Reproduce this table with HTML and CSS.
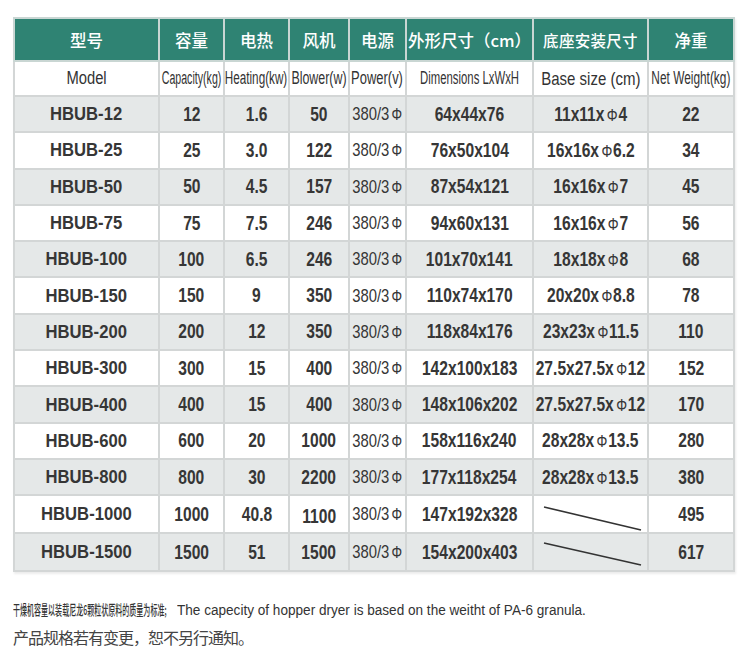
FILE: index.html
```html
<!DOCTYPE html>
<html lang="zh">
<head>
<meta charset="utf-8">
<title>HBUB 干燥机规格</title>
<link rel="stylesheet" href="styles.css">
</head>
<body>
<div class="page">
  <table class="spec">
    <colgroup>
      <col class="c-model"><col class="c-cap"><col class="c-heat"><col class="c-blow"><col class="c-pow"><col class="c-dim"><col class="c-base"><col class="c-net">
    </colgroup>
    <thead>
      <tr class="head-cn">
        <th>型号</th><th>容量</th><th>电热</th><th>风机</th><th>电源</th><th>外形尺寸（cm）</th><th class="wide">底座安装尺寸</th><th>净重</th>
      </tr>
      <tr class="head-en">
        <th><span class="t e82">Model</span></th>
        <th><span class="t e59">Capacity(kg)</span></th>
        <th><span class="t e65">Heating(kw)</span></th>
        <th><span class="t e69">Blower(w)</span></th>
        <th><span class="t e72">Power(v)</span></th>
        <th><span class="t e63">Dimensions LxWxH</span></th>
        <th><span class="t e79 big">Base size (cm)</span></th>
        <th><span class="t e66">Net Weight(kg)</span></th>
      </tr>
    </thead>
    <tbody>
      <tr><td><span class="t m">HBUB-12</span></td><td><span class="t n">12</span></td><td><span class="t n">1.6</span></td><td><span class="t n">50</span></td><td><span class="t p">380/3<span class="phi">Φ</span></span></td><td><span class="t n">64x44x76</span></td><td><span class="t n">11x11x<span class="phi">Φ</span>4</span></td><td><span class="t n">22</span></td></tr>
      <tr><td><span class="t m">HBUB-25</span></td><td><span class="t n">25</span></td><td><span class="t n">3.0</span></td><td><span class="t n">122</span></td><td><span class="t p">380/3<span class="phi">Φ</span></span></td><td><span class="t n">76x50x104</span></td><td><span class="t n">16x16x<span class="phi">Φ</span>6.2</span></td><td><span class="t n">34</span></td></tr>
      <tr><td><span class="t m">HBUB-50</span></td><td><span class="t n">50</span></td><td><span class="t n">4.5</span></td><td><span class="t n">157</span></td><td><span class="t p">380/3<span class="phi">Φ</span></span></td><td><span class="t n">87x54x121</span></td><td><span class="t n">16x16x<span class="phi">Φ</span>7</span></td><td><span class="t n">45</span></td></tr>
      <tr><td><span class="t m">HBUB-75</span></td><td><span class="t n">75</span></td><td><span class="t n">7.5</span></td><td><span class="t n">246</span></td><td><span class="t p">380/3<span class="phi">Φ</span></span></td><td><span class="t n">94x60x131</span></td><td><span class="t n">16x16x<span class="phi">Φ</span>7</span></td><td><span class="t n">56</span></td></tr>
      <tr><td><span class="t m">HBUB-100</span></td><td><span class="t n">100</span></td><td><span class="t n">6.5</span></td><td><span class="t n">246</span></td><td><span class="t p">380/3<span class="phi">Φ</span></span></td><td><span class="t n">101x70x141</span></td><td><span class="t n">18x18x<span class="phi">Φ</span>8</span></td><td><span class="t n">68</span></td></tr>
      <tr><td><span class="t m">HBUB-150</span></td><td><span class="t n">150</span></td><td><span class="t n">9</span></td><td><span class="t n">350</span></td><td><span class="t p">380/3<span class="phi">Φ</span></span></td><td><span class="t n">110x74x170</span></td><td><span class="t n">20x20x<span class="phi">Φ</span>8.8</span></td><td><span class="t n">78</span></td></tr>
      <tr><td><span class="t m">HBUB-200</span></td><td><span class="t n">200</span></td><td><span class="t n">12</span></td><td><span class="t n">350</span></td><td><span class="t p">380/3<span class="phi">Φ</span></span></td><td><span class="t n">118x84x176</span></td><td><span class="t n">23x23x<span class="phi">Φ</span>11.5</span></td><td><span class="t n">110</span></td></tr>
      <tr><td><span class="t m">HBUB-300</span></td><td><span class="t n">300</span></td><td><span class="t n">15</span></td><td><span class="t n">400</span></td><td><span class="t p">380/3<span class="phi">Φ</span></span></td><td><span class="t n">142x100x183</span></td><td><span class="t n">27.5x27.5x<span class="phi">Φ</span>12</span></td><td><span class="t n">152</span></td></tr>
      <tr><td><span class="t m">HBUB-400</span></td><td><span class="t n">400</span></td><td><span class="t n">15</span></td><td><span class="t n">400</span></td><td><span class="t p">380/3<span class="phi">Φ</span></span></td><td><span class="t n">148x106x202</span></td><td><span class="t n">27.5x27.5x<span class="phi">Φ</span>12</span></td><td><span class="t n">170</span></td></tr>
      <tr><td><span class="t m">HBUB-600</span></td><td><span class="t n">600</span></td><td><span class="t n">20</span></td><td><span class="t n">1000</span></td><td><span class="t p">380/3<span class="phi">Φ</span></span></td><td><span class="t n">158x116x240</span></td><td><span class="t n">28x28x<span class="phi">Φ</span>13.5</span></td><td><span class="t n">280</span></td></tr>
      <tr><td><span class="t m">HBUB-800</span></td><td><span class="t n">800</span></td><td><span class="t n">30</span></td><td><span class="t n">2200</span></td><td><span class="t p">380/3<span class="phi">Φ</span></span></td><td><span class="t n">177x118x254</span></td><td><span class="t n">28x28x<span class="phi">Φ</span>13.5</span></td><td><span class="t n">380</span></td></tr>
      <tr><td><span class="t m">HBUB-1000</span></td><td><span class="t n">1000</span></td><td><span class="t n">40.8</span></td><td><span class="t n low">1100</span></td><td><span class="t p">380/3<span class="phi">Φ</span></span></td><td><span class="t n">147x192x328</span></td><td class="slash"><svg class="slash-line" viewBox="0 0 115 36" width="115" height="36"><line x1="10" y1="11" x2="107" y2="34"/></svg></td><td><span class="t n">495</span></td></tr>
      <tr><td><span class="t m">HBUB-1500</span></td><td><span class="t n">1500</span></td><td><span class="t n">51</span></td><td><span class="t n">1500</span></td><td><span class="t p">380/3<span class="phi">Φ</span></span></td><td><span class="t n">154x200x403</span></td><td class="slash"><svg class="slash-line" viewBox="0 0 115 36" width="115" height="36"><line x1="10" y1="9" x2="107" y2="31"/></svg></td><td><span class="t n">617</span></td></tr>
    </tbody>
  </table>
  <div class="notes">
    <div class="note-1">
      <span class="note-cn"><span class="sq sq-cn">干燥机容量以装载尼龙6颗粒状原料的质量为标准;</span></span><span class="note-en"><span class="sq sq-en">The capecity of hopper dryer is based on the weitht of PA-6 granula.</span></span>
    </div>
    <div class="note-2">产品规格若有变更，恕不另行通知。</div>
  </div>
</div>
</body>
</html>
```

FILE: styles.css
```css
html, body {
  margin: 0;
  padding: 0;
  background: #ffffff;
}

.page {
  padding: 17px 0 0 13px;
  font-family: "Liberation Sans", Arial, "Noto Sans CJK SC", sans-serif;
  color: #353535;
}

.spec {
  border-collapse: collapse;
  table-layout: fixed;
  width: 720px;
  box-shadow: 1px 2px 2px rgba(0, 0, 0, 0.08);
}

.c-model { width: 145px; }
.c-cap { width: 65px; }
.c-heat { width: 65px; }
.c-blow { width: 60px; }
.c-pow { width: 57px; }
.c-dim { width: 127px; }
.c-base { width: 115px; }
.c-net { width: 86px; }

.spec th,
.spec td {
  border: 2px solid #d3d6d6;
  padding: 0;
  text-align: center;
  vertical-align: middle;
  white-space: nowrap;
}

.head-cn th {
  height: 41px;
  background: #2f8373;
  color: #ffffff;
  font-family: "Noto Sans CJK SC", sans-serif;
  font-size: 16.5px;
  font-weight: 500;
  border-color: #c9d6d3;
}

.head-cn th.wide {
  font-size: 15.5px;
  letter-spacing: 0.3px;
}

.head-en th {
  height: 33px;
  background: #ffffff;
  font-weight: normal;
  font-size: 18px;
  color: #333333;
}

/* condensed text: negative side margins let wide text stay centred */
.t {
  display: inline-block;
  margin: 0 -40px;
}

.big { font-size: 19px; }

.e59 { transform: scaleX(0.59); }
.e63 { transform: scaleX(0.63); }
.e65 { transform: scaleX(0.65); }
.e66 { transform: scaleX(0.66); }
.e69 { transform: scaleX(0.69); }
.e72 { transform: scaleX(0.72); }
.e79 { transform: scaleX(0.79); }
.e82 { transform: scaleX(0.82); }

.spec tbody tr {
  height: 36.3px;
}

.spec tbody tr:nth-child(odd) td {
  background: #e5e8e8;
}

.spec tbody tr:nth-child(even) td {
  background: #ffffff;
}

.spec td {
  color: #363636;
}

.m {
  font-size: 18.5px;
  font-weight: bold;
  transform: scaleX(0.9);
}

.n {
  font-size: 19.5px;
  font-weight: bold;
  transform: scaleX(0.8);
}

.low {
  position: relative;
  top: 2px;
}

.p {
  font-size: 19px;
  font-weight: normal;
  transform: scaleX(0.78);
}

.phi {
  font-weight: normal;
  font-size: 17px;
  margin: 0 1px 0 3px;
}

.spec td.slash {
  padding: 0;
}

.slash-line {
  display: block;
}

.slash-line line {
  stroke: #333333;
  stroke-width: 1.6;
}

.notes {
  padding-top: 27px;
}

.note-1 {
  display: flex;
  align-items: baseline;
  height: 20px;
  font-size: 14px;
  color: #333333;
  white-space: nowrap;
}

.note-cn {
  display: inline-block;
  width: 164px;
}

.note-en {
  display: inline-block;
}

.sq {
  display: inline-block;
  transform-origin: left center;
}

.sq-cn {
  font-family: "Noto Sans CJK SC", sans-serif;
  font-size: 13.5px;
  font-weight: 500;
  transform: scaleX(0.52);
}

.sq-en {
  transform: scaleX(0.97);
}

.note-2 {
  margin-top: 6px;
  font-family: "Noto Sans CJK SC", sans-serif;
  font-size: 16px;
  letter-spacing: -1px;
  font-weight: 400;
  color: #444444;
}
```
